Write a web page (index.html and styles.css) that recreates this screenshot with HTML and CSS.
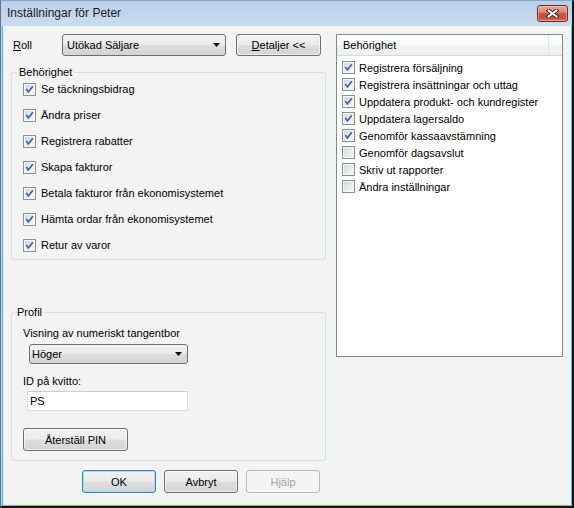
FILE: index.html
```html
<!DOCTYPE html>
<html lang="sv">
<head>
<meta charset="utf-8">
<title>Inställningar för Peter</title>
<link rel="stylesheet" href="styles.css">
</head>
<body>
<div class="window">
  <div class="titlebar">
    <span class="title">Inställningar för Peter</span>
    <button class="close" aria-label="Stäng">
      <svg width="13" height="9" viewBox="0 0 13 9"><path d="M2.5 1.5 L10.5 7.5 M10.5 1.5 L2.5 7.5" stroke="#4a1a12" stroke-width="3.8" stroke-linecap="square" fill="none"/><path d="M2.5 1.5 L10.5 7.5 M10.5 1.5 L2.5 7.5" stroke="#ffffff" stroke-width="2" stroke-linecap="square" fill="none"/></svg>
    </button>
  </div>
  <div class="client">
    <div class="left">
      <div class="toprow">
        <span class="roll"><u>R</u>oll</span>
        <div class="combo combo-roll"><span>Utökad Säljare</span><svg class="arrow" width="7" height="4" viewBox="0 0 7 4"><path d="M0 0H7L3.5 4Z"/></svg></div>
        <button class="btn btn-details"><u>D</u>etaljer &lt;&lt;</button>
      </div>
      <fieldset class="group group-perm">
        <legend>Behörighet</legend>
        <ul class="checklist">
          <li><span class="cb"><svg width="9" height="9" viewBox="0 0 9 9"><path d="M1.3 4 L3.4 6.9 L7.8 1.2"/></svg></span>Se täckningsbidrag</li>
          <li><span class="cb"><svg width="9" height="9" viewBox="0 0 9 9"><path d="M1.3 4 L3.4 6.9 L7.8 1.2"/></svg></span>Ändra priser</li>
          <li><span class="cb"><svg width="9" height="9" viewBox="0 0 9 9"><path d="M1.3 4 L3.4 6.9 L7.8 1.2"/></svg></span>Registrera rabatter</li>
          <li><span class="cb"><svg width="9" height="9" viewBox="0 0 9 9"><path d="M1.3 4 L3.4 6.9 L7.8 1.2"/></svg></span>Skapa fakturor</li>
          <li><span class="cb"><svg width="9" height="9" viewBox="0 0 9 9"><path d="M1.3 4 L3.4 6.9 L7.8 1.2"/></svg></span>Betala fakturor från ekonomisystemet</li>
          <li><span class="cb"><svg width="9" height="9" viewBox="0 0 9 9"><path d="M1.3 4 L3.4 6.9 L7.8 1.2"/></svg></span>Hämta ordar från ekonomisystemet</li>
          <li><span class="cb"><svg width="9" height="9" viewBox="0 0 9 9"><path d="M1.3 4 L3.4 6.9 L7.8 1.2"/></svg></span>Retur av varor</li>
        </ul>
      </fieldset>
      <fieldset class="group group-profile">
        <legend>Profil</legend>
        <div class="field-label">Visning av numeriskt tangentbor</div>
        <div class="combo combo-side"><span>Höger</span><svg class="arrow" width="7" height="4" viewBox="0 0 7 4"><path d="M0 0H7L3.5 4Z"/></svg></div>
        <div class="field-label label-id">ID på kvitto:</div>
        <div class="textbox">PS</div>
        <button class="btn btn-reset">Återställ PIN</button>
      </fieldset>
      <div class="buttons">
        <button class="btn btn-dialog btn-default">OK</button>
        <button class="btn btn-dialog">Avbryt</button>
        <button class="btn btn-dialog" disabled>Hjälp</button>
      </div>
    </div>
    <div class="listview">
      <div class="lv-header">
        <div class="lv-col">Behörighet</div>
        <div class="lv-rest"></div>
      </div>
      <ul class="lv-items">
        <li><span class="cb"><svg width="9" height="9" viewBox="0 0 9 9"><path d="M1.3 4 L3.4 6.9 L7.8 1.2"/></svg></span>Registrera försäljning</li>
        <li><span class="cb"><svg width="9" height="9" viewBox="0 0 9 9"><path d="M1.3 4 L3.4 6.9 L7.8 1.2"/></svg></span>Registrera insättningar och uttag</li>
        <li><span class="cb"><svg width="9" height="9" viewBox="0 0 9 9"><path d="M1.3 4 L3.4 6.9 L7.8 1.2"/></svg></span>Uppdatera produkt- och kundregister</li>
        <li><span class="cb"><svg width="9" height="9" viewBox="0 0 9 9"><path d="M1.3 4 L3.4 6.9 L7.8 1.2"/></svg></span>Uppdatera lagersaldo</li>
        <li><span class="cb"><svg width="9" height="9" viewBox="0 0 9 9"><path d="M1.3 4 L3.4 6.9 L7.8 1.2"/></svg></span>Genomför kassaavstämning</li>
        <li><span class="cb cb-off"></span>Genomför dagsavslut</li>
        <li><span class="cb cb-off"></span>Skriv ut rapporter</li>
        <li><span class="cb cb-off"></span>Ändra inställningar</li>
      </ul>
    </div>
  </div>
</div>
</body>
</html>
```

FILE: styles.css
```css
html, body {
  margin: 0;
  padding: 0;
  background: #f3f3f3;
}

body {
  font-family: "Liberation Sans", Arial, sans-serif;
  font-size: 11px;
  color: #000;
}

.window {
  width: 574px;
  height: 508px;
  box-sizing: border-box;
  border-top: 1px solid #8ea6c4;
  border-left: 1px solid #5e7391;
  border-right: 2px solid #151515;
  border-bottom: 2px solid #151515;
  background: #c2d6ed;
  display: flex;
  flex-direction: column;
}

.titlebar {
  height: 25px;
  flex: none;
  display: flex;
  align-items: flex-start;
  justify-content: space-between;
  padding-left: 6px;
  background: linear-gradient(#b9d0ea, #c9dcf1);
}

.title {
  font-size: 12px;
  line-height: 25px;
  color: #1b1b1b;
}

.close {
  margin: 4px 4px 0 0;
  width: 31px;
  height: 17px;
  padding: 0;
  box-sizing: border-box;
  border: 1px solid #6d2a1e;
  border-radius: 3px;
  background: linear-gradient(#e9ab9c 0%, #d98672 42%, #c75a42 50%, #c24f37 78%, #d4745e 100%);
  box-shadow: inset 0 0 0 1px rgba(255, 220, 210, 0.45);
  display: flex;
  align-items: center;
  justify-content: center;
}

.client {
  flex: 1;
  margin-left: 1px;
  border-left: 1px solid #44b9e8;
  border-right: 1px solid #44c4ee;
  border-bottom: 1px solid #44c4ee;
  background: #f3f3f3;
  display: flex;
  align-items: flex-start;
  gap: 10px;
  padding: 8px 8px 0 8px;
}

.left {
  width: 315px;
  flex: none;
  display: flex;
  flex-direction: column;
}

.toprow {
  display: flex;
  align-items: center;
  height: 22px;
}

.roll {
  width: 51px;
  box-sizing: border-box;
  padding-left: 2px;
}

.combo {
  display: flex;
  align-items: center;
  justify-content: space-between;
  box-sizing: border-box;
  border: 1px solid #707070;
  border-radius: 3px;
  background: linear-gradient(#f2f2f2 0%, #ebebeb 48%, #dedede 52%, #d4d4d4 100%);
  padding-right: 5px;
}

.combo-roll {
  width: 164px;
  height: 22px;
  padding-left: 4px;
}

.combo-side {
  width: 159px;
  height: 20px;
  margin: 4px 0 0 6px;
  padding-left: 2px;
}

.arrow {
  flex: none;
}

.btn {
  font-family: inherit;
  font-size: 11px;
  color: #000;
  padding: 0;
  box-sizing: border-box;
  border: 1px solid #707070;
  border-radius: 3px;
  background: linear-gradient(#f2f2f2 0%, #ebebeb 48%, #dedede 52%, #d4d4d4 100%);
  box-shadow: inset 0 0 0 1px rgba(255, 255, 255, 0.6);
}

.btn-details {
  margin-left: 10px;
  width: 85px;
  height: 22px;
}

.group {
  margin: 0;
  border: 1px solid #d5dfe5;
  border-radius: 3px;
  min-width: 0;
}

.group legend {
  padding: 0 2px;
  line-height: 14px;
}

.group-perm {
  margin-top: 9px;
  padding: 2px 10px 6px 11px;
}

.group-perm legend {
  margin-left: -6px;
}

.group-profile {
  margin-top: 45px;
  padding: 7px 10px 9px 11px;
}

.group-profile legend {
  margin-left: -8px;
}

.checklist {
  list-style: none;
  margin: 0;
  padding: 0;
  display: flex;
  flex-direction: column;
  gap: 10px;
}

.checklist li {
  height: 16px;
  display: flex;
  align-items: center;
  gap: 5px;
}

.cb {
  flex: none;
  width: 13px;
  height: 13px;
  box-sizing: border-box;
  border: 1px solid #8e8f8f;
  padding: 1px;
  background: linear-gradient(135deg, #d3d9e2, #f7f9fb) content-box, #f6f6f6;
  display: flex;
}

.cb-off {
  background: linear-gradient(135deg, #d6d8db, #f8f8f8) content-box, #f6f6f6;
}

.cb svg {
  overflow: visible;
}

.cb svg path {
  fill: none;
  stroke: #41609f;
  stroke-width: 1.7;
}

.field-label {
  line-height: 14px;
}

.label-id {
  margin-top: 10px;
}

.textbox {
  width: 161px;
  height: 20px;
  box-sizing: border-box;
  margin: 3px 0 0 4px;
  padding-left: 2px;
  line-height: 18px;
  background: #fff;
  border: 1px solid #dcdfe4;
  border-top-color: #c9ccd2;
}

.btn-reset {
  margin-top: 17px;
  width: 105px;
  height: 23px;
}

.buttons {
  display: flex;
  justify-content: flex-end;
  gap: 8px;
  padding-right: 6px;
  margin-top: 9px;
}

.btn-dialog {
  width: 74px;
  height: 23px;
}

.btn-default {
  border-color: #3c7fb1;
  box-shadow: inset 0 0 0 1px #9fe2f8;
}

.btn:disabled {
  color: #a3a3a3;
  border-color: #b5b9bc;
  background: #f4f4f4;
  box-shadow: none;
}

.listview {
  width: 227px;
  height: 323px;
  flex: none;
  box-sizing: border-box;
  border: 1px solid #828790;
  background: #fff;
}

.lv-header {
  display: flex;
  height: 21px;
  box-sizing: border-box;
  border-bottom: 1px solid #d8d8d8;
  background: linear-gradient(#ffffff 0%, #fbfbfc 45%, #f1f2f4 55%, #eef0f2 100%);
}

.lv-col {
  width: 212px;
  box-sizing: border-box;
  border-right: 1px solid #e1e3e6;
  padding: 3px 0 0 6px;
  line-height: 14px;
}

.lv-rest {
  flex: 1;
}

.lv-items {
  list-style: none;
  margin: 0;
  padding: 3px 0 0 5px;
}

.lv-items li {
  height: 17px;
  display: flex;
  align-items: center;
  gap: 4px;
}
```
